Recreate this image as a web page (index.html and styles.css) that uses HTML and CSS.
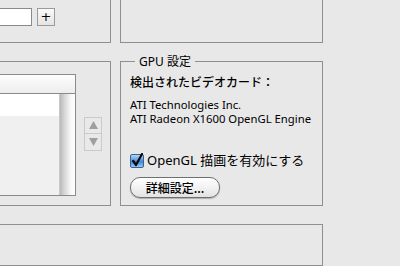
FILE: index.html
```html
<!DOCTYPE html>
<html lang="ja">
<head>
<meta charset="UTF-8" />
<title>ディスプレイ設定</title>
<link rel="stylesheet" href="styles.css">
</head>
<body>

<div class="page">
  <div class="box top-left">
    <input type="text" class="field" />
    <button class="plus">+</button>
  </div>
  <div class="box top-right"></div>

  <div class="box list-box">
    <div class="list">
      <div class="list-head"></div>
      <div class="list-body">
        <div class="rows">
          <div class="row"></div>
        </div>
        <div class="scroll"></div>
      </div>
    </div>
    <div class="stepper">
      <button class="step"><svg width="9" height="8" viewBox="0 0 9 8"><path d="M4.5 0 L9 8 L0 8 Z" fill="#9f9f9f"/></svg></button>
      <button class="step"><svg width="9" height="8" viewBox="0 0 9 8"><path d="M0 0 L9 0 L4.5 8 Z" fill="#9f9f9f"/></svg></button>
    </div>
  </div>

  <fieldset class="box gpu">
    <legend>GPU 設定</legend>
    <div class="gpu-title">検出されたビデオカード：</div>
    <div class="card-name">ATI Technologies Inc.<br>ATI Radeon X1600 OpenGL Engine</div>
    <label class="check-row">
      <span class="check">
        <svg width="14" height="15" viewBox="0 0 14 15">
          <defs>
            <linearGradient id="cb" x1="0" y1="0" x2="0" y2="1">
              <stop offset="0" stop-color="#bcd9f6"/>
              <stop offset="0.45" stop-color="#5a9ae0"/>
              <stop offset="0.55" stop-color="#3f85d8"/>
              <stop offset="1" stop-color="#9fd0fb"/>
            </linearGradient>
          </defs>
          <rect x="0.5" y="1.5" width="13" height="13" rx="1.5" fill="url(#cb)" stroke="#3d628e"/>
          <path d="M3.2 8 L6 12 L12 1" fill="none" stroke="#0a0a0a" stroke-width="2.2" stroke-linecap="round" stroke-linejoin="round"/>
        </svg>
      </span>
      OpenGL 描画を有効にする
    </label>
    <button class="pill">詳細設定...</button>
  </fieldset>

  <div class="box bottom"></div>
</div>

</body>
</html>
```

FILE: styles.css
```css
body { margin: 0; background: #e8e8e8; font-family: "Noto Sans", "Noto Sans CJK JP", sans-serif; color: #000; overflow: hidden; }
.page { display: grid; grid-template-columns: 151px 203px; grid-template-rows: 63px 145px 42px; column-gap: 9px; row-gap: 18px; margin-left: -40px; margin-top: -20px; }
.box { border: 1px solid #8f8f8f; box-sizing: border-box; margin: 0; }

.top-left { display: flex; align-items: flex-start; padding-top: 27px; padding-left: 20px; gap: 5px; }
.field { width: 51px; height: 18px; box-sizing: border-box; border: 1px solid #8a8a8a; background: #fff; padding: 0; margin: 0; }
.plus { width: 18px; height: 18px; box-sizing: border-box; border: 1px solid #9a9a9a; background: linear-gradient(#fafafa, #e4e4e4); font-size: 13px; line-height: 14px; padding: 0; font-family: "DejaVu Sans", sans-serif; }

.list-box { display: flex; align-items: center; justify-content: flex-end; padding-right: 8px; gap: 8px; }
.list { width: 116px; height: 122px; border: 1px solid #8a8a8a; box-sizing: border-box; display: flex; flex-direction: column; align-self: flex-start; margin-top: 12px; }
.list-head { height: 18px; border-bottom: 1px solid #8a8a8a; background: linear-gradient(#fdfdfd, #ededed); }
.list-body { flex: 1; display: flex; }
.rows { flex: 1; background: #f0f0f0; }
.row { height: 22px; background: #fff; }
.scroll { width: 15px; background: linear-gradient(to right, #b9b9b9, #d6d6d6 30%, #f7f7f7 70%, #ffffff); border-left: 1px solid #c8c8c8; }
.stepper { display: flex; flex-direction: column; }
.step { width: 18px; height: 17px; box-sizing: border-box; border: 1px solid #cacaca; background: #e9e9e9; padding: 0; display: flex; align-items: center; justify-content: center; }
.step + .step { border-top: none; height: 17px; }

.gpu { margin-top: -7px; padding: 0 8px 0 9px; display: flex; flex-direction: column; align-items: flex-start; min-width: 0; }
.gpu legend { font-size: 12px; line-height: 15px; padding: 0 4px; margin-left: 5px; }
.gpu-title { font-size: 12px; line-height: 16px; margin-top: 6px; font-weight: 500; }
.card-name { font-size: 11.3px; line-height: 14px; margin-top: 7px; }
.check-row { display: flex; align-items: center; gap: 3px; font-size: 13px; line-height: 16px; margin-top: 26px; }
.check { display: flex; }
.pill { margin-top: 9px; height: 21px; width: 90px; box-sizing: border-box; border: 1px solid #6f6f6f; border-radius: 10px; background: linear-gradient(#ffffff, #f2f2f2 50%, #e2e2e2); box-shadow: 0 1px 1px rgba(0,0,0,0.25); font-family: "Noto Sans CJK JP", sans-serif; font-size: 12px; font-weight: 500; padding: 0; line-height: 18px; }

.bottom { grid-column: 1 / 3; }
```
